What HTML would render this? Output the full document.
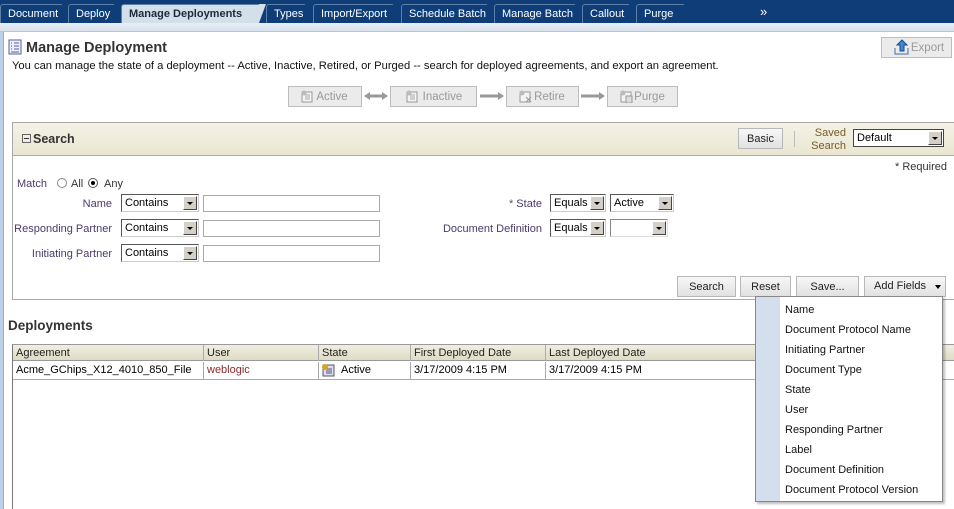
<!DOCTYPE html>
<html><head><style>
*{margin:0;padding:0;box-sizing:border-box}
body{width:954px;height:509px;overflow:hidden;background:#fff;font-family:"Liberation Sans",Tahoma,sans-serif;font-size:11px;color:#000;position:relative}
.a{position:absolute;white-space:nowrap}
.tabbar{left:0;top:0;width:954px;height:23px;background:#0e3d78}
.tab{position:absolute;top:4px;height:19px;color:#fff;font-size:11px;line-height:19px;padding-left:7px;background:#0e3d78;border-left:1px solid #5d7fa8;border-top:1px solid #5d7fa8;border-radius:3px 0 0 0;white-space:nowrap}
.tab:after{content:"";position:absolute;right:-7px;top:-1px;border-left:7px solid #0e3d78;border-bottom:19px solid transparent}
.tab.act{background:#d3e0ea;color:#1d2a3a;font-weight:bold}
.tab.act:after{border-left-color:#d3e0ea}
.btn{position:absolute;border:1px solid #b8b8b8;background:linear-gradient(#f7f7f7,#e1e1e1);font-size:11px;text-align:center;line-height:18px;color:#222;white-space:nowrap}
.dis{background:#ebebeb;border-color:#bdbdbd;color:#9a9a9a;font-size:11.5px}
.lbl{position:absolute;color:#4a3a6b;font-size:11px;text-align:right;white-space:nowrap}
.sel{position:absolute;height:18px;border:1px solid #555;border-right-color:#ccc;border-bottom-color:#ccc;background:#fff;font-size:11px;line-height:17px;padding-left:3px}
.sel b{position:absolute;right:1px;top:1px;width:14px;height:14px;background:#d4d0c8;border:1px solid #fff;border-right-color:#444;border-bottom-color:#444}
.sel b:after{content:"";position:absolute;left:3px;top:5px;border-left:3px solid transparent;border-right:3px solid transparent;border-top:3px solid #000}
.inp{position:absolute;height:17px;border:1px solid #aaa;background:#fff}
.th{position:absolute;top:345px;height:16px;line-height:17px;padding-left:3px;border-right:1px solid #aaa;font-size:11px;color:#222;white-space:nowrap}
.td{position:absolute;top:362px;height:17px;line-height:17px;padding-left:3px;border-right:1px solid #aaa;font-size:11px;white-space:nowrap}
.mi{position:absolute;left:785px;font-size:11px;color:#111;white-space:nowrap}
</style></head><body>
<div class="a tabbar"></div>
<div class="tab" style="left:0;width:62px">Document</div>
<div class="tab" style="left:68px;width:46px">Deploy</div>
<div class="tab act" style="left:121px;width:138px">Manage Deployments</div>
<div class="tab" style="left:266px;width:39px">Types</div>
<div class="tab" style="left:313px;width:80px">Import/Export</div>
<div class="tab" style="left:401px;width:86px">Schedule Batch</div>
<div class="tab" style="left:494px;width:81px">Manage Batch</div>
<div class="tab" style="left:582px;width:47px">Callout</div>
<div class="tab" style="left:636px;width:48px">Purge</div>
<div class="a" style="left:760px;top:4px;color:#fff;font-size:13px">»</div>
<div class="a" style="left:0;top:23px;width:954px;height:9px;background:linear-gradient(#e8eef5,#d7e1ec);border-bottom:1px solid #b5c5d8"></div>
<div class="a" style="left:0;top:32px;width:3px;height:477px;background:#bcd0e6"></div>
<div class="a" style="left:3px;top:32px;width:1px;height:477px;background:#9ab0c8"></div>

<svg class="a" style="left:8px;top:39px" width="14" height="16"><rect x="1" y="1" width="12" height="14" fill="#eef" stroke="#55609a"/><path d="M3 4h1M3 7h1M3 10h1" stroke="#c33"/><path d="M6 4h5M6 7h5M6 10h5M3 13h8" stroke="#55609a"/></svg>
<div class="a" style="left:26px;top:40px;font-size:14.5px;font-weight:bold;color:#333">Manage Deployment</div>
<div class="a" style="left:12px;top:60px;font-size:11.2px;color:#111">You can manage the state of a deployment -- Active, Inactive, Retired, or Purged -- search for deployed agreements, and export an agreement.</div>

<div class="btn dis" style="left:881px;top:37px;width:71px;height:21px;line-height:20px;padding-left:22px">Export</div>
<svg class="a" style="left:894px;top:39px" width="16" height="16"><path d="M1 9v6h13V9" fill="none" stroke="#4a6a9a"/><path d="M8 1l5 5h-3v6H6V6H3z" fill="#3a8ad8" stroke="#1a4a90"/></svg>

<div class="btn dis" style="left:288px;top:86px;width:74px;height:21px;line-height:20px;padding-left:14px">Active</div>
<div class="btn dis" style="left:390px;top:86px;width:87px;height:21px;line-height:20px;padding-left:18px">Inactive</div>
<div class="btn dis" style="left:506px;top:86px;width:73px;height:21px;line-height:20px;padding-left:14px">Retire</div>
<div class="btn dis" style="left:607px;top:86px;width:71px;height:21px;line-height:20px;padding-left:14px">Purge</div>
<svg class="a" style="left:300px;top:89px" width="14" height="14"><rect x="2" y="3" width="10" height="10" fill="#f4f4f4" stroke="#999"/><path d="M5 6h5M5 8h5M5 10h5" stroke="#aaa"/><circle cx="4" cy="4" r="2.5" fill="#bbb"/></svg>
<svg class="a" style="left:405px;top:89px" width="14" height="14"><rect x="2" y="3" width="10" height="10" fill="#f4f4f4" stroke="#999"/><path d="M5 6h5M5 8h5M5 10h5" stroke="#aaa"/><circle cx="4" cy="4" r="2.5" fill="#bbb"/></svg>
<svg class="a" style="left:518px;top:89px" width="14" height="14"><rect x="2" y="3" width="10" height="10" fill="#f4f4f4" stroke="#999"/><path d="M8 8l5 5M13 8l-5 5" stroke="#999"/><circle cx="4" cy="4" r="2.5" fill="#bbb"/></svg>
<svg class="a" style="left:619px;top:89px" width="14" height="14"><rect x="2" y="3" width="10" height="10" fill="#f4f4f4" stroke="#999"/><rect x="7" y="7" width="6" height="7" fill="#ddd" stroke="#999"/><circle cx="4" cy="4" r="2.5" fill="#bbb"/></svg>
<svg class="a" style="left:364px;top:91px" width="24" height="10"><path d="M5 5h14" stroke="#999" stroke-width="3"/><path d="M0 5l6-4v8zM24 5l-6-4v8z" fill="#999"/></svg>
<svg class="a" style="left:480px;top:91px" width="24" height="10"><path d="M0 5h18" stroke="#999" stroke-width="3"/><path d="M24 5l-6-4v8z" fill="#999"/></svg>
<svg class="a" style="left:581px;top:91px" width="24" height="10"><path d="M0 5h18" stroke="#999" stroke-width="3"/><path d="M24 5l-6-4v8z" fill="#999"/></svg>

<div class="a" style="left:12px;top:122px;width:944px;height:178px;border:1px solid #a9a9a9"></div>
<div class="a" style="left:13px;top:123px;width:941px;height:33px;background:linear-gradient(#f4f2e6,#e9e6d2);border-bottom:1px solid #a9a9a9"></div>
<div class="a" style="left:22px;top:134px;width:9px;height:9px;border:1px solid #666"></div>
<div class="a" style="left:24px;top:138px;width:5px;height:1px;background:#333"></div>
<div class="a" style="left:33px;top:132px;font-size:12.5px;font-weight:bold;color:#333">Search</div>
<div class="btn" style="left:738px;top:128px;width:45px;height:21px;line-height:20px">Basic</div>
<div class="a" style="left:794px;top:131px;width:1px;height:16px;background:#bbb"></div>
<div class="a" style="left:806px;top:127px;font-size:11px;color:#7a5a22;text-align:right;line-height:13px;width:40px">Saved<br>Search</div>
<div class="sel" style="left:853px;top:129px;width:91px;height:18px;border:1px solid #444"><span>Default</span><b></b></div>
<div class="a" style="left:895px;top:161px;font-size:11px;color:#333">* Required</div>

<div class="lbl" style="left:17px;top:178px">Match</div>
<div class="a" style="left:57px;top:178px;width:10px;height:10px;border-radius:50%;border:1px solid #888;background:#fff"></div>
<div class="a" style="left:71px;top:178px;color:#333">All</div>
<div class="a" style="left:88px;top:178px;width:10px;height:10px;border-radius:50%;border:1px solid #555;background:#fff"></div>
<div class="a" style="left:91px;top:181px;width:4px;height:4px;border-radius:50%;background:#000"></div>
<div class="a" style="left:104px;top:178px;color:#333">Any</div>

<div class="lbl" style="left:17px;top:198px;width:95px">Name</div>
<div class="lbl" style="left:10px;top:223px;width:102px">Responding Partner</div>
<div class="lbl" style="left:17px;top:248px;width:95px">Initiating Partner</div>
<div class="sel" style="left:121px;top:194px;width:78px">Contains<b></b></div>
<div class="sel" style="left:121px;top:219px;width:78px">Contains<b></b></div>
<div class="sel" style="left:121px;top:244px;width:78px">Contains<b></b></div>
<div class="inp" style="left:203px;top:195px;width:177px"></div>
<div class="inp" style="left:203px;top:220px;width:177px"></div>
<div class="inp" style="left:203px;top:245px;width:177px"></div>

<div class="lbl" style="left:440px;top:198px;width:102px"><span style="color:#555">*</span> State</div>
<div class="lbl" style="left:430px;top:223px;width:112px">Document Definition</div>
<div class="sel" style="left:550px;top:194px;width:56px">Equals<b></b></div>
<div class="sel" style="left:610px;top:194px;width:64px">Active<b></b></div>
<div class="sel" style="left:550px;top:219px;width:56px">Equals<b></b></div>
<div class="sel" style="left:610px;top:219px;width:58px;border-color:#888 #ddd #ddd #888"><b></b></div>

<div class="btn" style="left:677px;top:276px;width:59px;height:21px;line-height:20px">Search</div>
<div class="btn" style="left:740px;top:276px;width:51px;height:21px;line-height:20px">Reset</div>
<div class="btn" style="left:796px;top:276px;width:63px;height:21px;line-height:20px">Save...</div>
<div class="btn" style="left:864px;top:276px;width:82px;height:21px;line-height:19px;text-align:left;padding-left:9px">Add Fields</div>
<div class="a" style="left:935px;top:285px;border-left:3px solid transparent;border-right:3px solid transparent;border-top:4px solid #000"></div>

<div class="a" style="left:8px;top:318px;font-size:13.5px;font-weight:bold;color:#333">Deployments</div>

<div class="a" style="left:12px;top:344px;width:944px;height:165px;border-left:1px solid #777;border-top:1px solid #999"></div>
<div class="a" style="left:13px;top:345px;width:941px;height:16px;background:linear-gradient(#f0eee0,#dedbc6);border-bottom:1px solid #999"></div>
<div class="a" style="left:13px;top:379px;width:941px;height:1px;background:#aaa"></div>
<div class="th" style="left:13px;width:191px">Agreement</div>
<div class="th" style="left:204px;width:115px">User</div>
<div class="th" style="left:319px;width:92px">State</div>
<div class="th" style="left:411px;width:135px">First Deployed Date</div>
<div class="th" style="left:546px;width:210px;border:none">Last Deployed Date</div>
<div class="td" style="left:13px;width:191px">Acme_GChips_X12_4010_850_File</div>
<div class="td" style="left:204px;width:115px;color:#8a2a2a">weblogic</div>
<div class="td" style="left:319px;width:92px;padding-left:22px">Active</div>
<svg class="a" style="left:321px;top:363px" width="14" height="14"><rect x="2" y="2" width="11" height="11" fill="#dde" stroke="#556"/><path d="M5 6h6M5 8h6M5 10h6" stroke="#557"/><circle cx="4" cy="4" r="3" fill="#d9a520"/></svg>
<div class="td" style="left:411px;width:135px">3/17/2009 4:15 PM</div>
<div class="td" style="left:546px;width:210px;border:none">3/17/2009 4:15 PM</div>

<div class="a" style="left:755px;top:296px;width:188px;height:206px;background:#fff;border:1px solid #888;box-shadow:2px 2px 2px rgba(0,0,0,.25)"></div>
<div class="a" style="left:756px;top:297px;width:24px;height:204px;background:#d3dfed"></div>
<div class="mi" style="top:304px">Name</div>
<div class="mi" style="top:324px">Document Protocol Name</div>
<div class="mi" style="top:344px">Initiating Partner</div>
<div class="mi" style="top:364px">Document Type</div>
<div class="mi" style="top:384px">State</div>
<div class="mi" style="top:404px">User</div>
<div class="mi" style="top:424px">Responding Partner</div>
<div class="mi" style="top:444px">Label</div>
<div class="mi" style="top:464px">Document Definition</div>
<div class="mi" style="top:484px">Document Protocol Version</div>
</body></html>
